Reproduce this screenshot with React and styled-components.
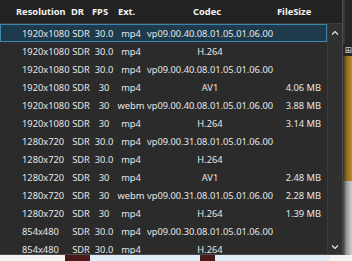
import React from "react";
import styled, { createGlobalStyle } from "styled-components";

const Global = createGlobalStyle`
  html, body { margin: 0; padding: 0; background: #1e1e1e; }
  body { font-family: "Noto Sans", "Open Sans", sans-serif; }
`;

const Stage = styled.div`
  width: 352px;
  height: 261px;
  display: grid;
  grid-template-columns: 343px 9px;
  grid-template-rows: 255px 6px;
  overflow: hidden;
`;

const Popup = styled.div`
  grid-column: 1;
  grid-row: 1;
  display: grid;
  grid-template-rows: 24px 1fr;
  background: #2b2b2b;
  border-right: 1px solid #4b4b4b;
  border-bottom: 1px solid #4b4b4b;
  overflow: hidden;
  font-size: 9.3px;
  color: #e6e6e6;
`;

const Header = styled.div`
  display: grid;
  grid-template-columns: 55px 21px 26px 75px 84px 1fr;
  align-items: center;
  padding-left: 16px;
  background: #222222;
  border-bottom: 1px solid #3e3e3e;
  font-weight: 700;
  color: #f2f2f2;
`;

const Body = styled.div`
  display: flex;
  overflow: hidden;
`;

const List = styled.div`
  flex: 1;
  display: flex;
  flex-direction: column;
`;

const Row = styled.div`
  flex: none;
  height: 18px;
  box-sizing: border-box;
  display: grid;
  grid-template-columns: 48px 22px 24px 30px 128px 47px;
  align-items: center;
  padding-left: 21px;
  background: ${(p) => (p.$selected ? "#1d3b4d" : "transparent")};
  border: 1px solid ${(p) => (p.$selected ? "#3f86ad" : "transparent")};
  white-space: nowrap;
`;

const Cell = styled.span`
  text-align: ${(p) => p.$align || "center"};
`;

const Scrollbar = styled.div`
  width: 14px;
  flex: none;
  background: #303030;
  border-left: 1px solid #3a3a3a;
  display: flex;
  flex-direction: column;
  justify-content: space-between;
  align-items: center;
  padding: 5px 0 3px;
`;

const Arrow = styled.svg`
  width: 8px;
  height: 8px;
  display: block;
`;

const Side = styled.div`
  grid-column: 2;
  grid-row: 1;
  display: grid;
  grid-template-rows: 44px 12px 125px 1fr;
  background: #262626;
`;

const SideDark = styled.div`
  border-left: 2px solid #3a3a3a;
`;

const SideIcon = styled.div`
  display: flex;
  align-items: center;
  justify-content: flex-end;
  color: #cfcfcf;
  font-size: 9px;
  line-height: 1;
  font-family: "DejaVu Sans", sans-serif;
`;

const SideOrange = styled.div`
  background: linear-gradient(90deg, #3a3020 0%, #8a6a22 40%, #c08b2c 100%);
`;

const SideGray = styled.div`
  background: linear-gradient(90deg, #3a3a3a 0%, #9a9a9a 40%, #cfcfcf 100%);
`;

const Bottom = styled.div`
  grid-column: 1 / span 2;
  grid-row: 2;
  display: grid;
  grid-template-columns: 65px 25px 110px 15px 115px 1fr;
`;

const Block = styled.div`
  background: ${(p) => p.$c};
`;

const rows = [
  ["1920x1080", "SDR", "30.0", "mp4", "vp09.00.40.08.01.05.01.06.00", ""],
  ["1920x1080", "SDR", "30.0", "mp4", "H.264", ""],
  ["1920x1080", "SDR", "30.0", "mp4", "vp09.00.40.08.01.05.01.06.00", ""],
  ["1920x1080", "SDR", "30", "mp4", "AV1", "4.06 MB"],
  ["1920x1080", "SDR", "30", "webm", "vp09.00.40.08.01.05.01.06.00", "3.88 MB"],
  ["1920x1080", "SDR", "30", "mp4", "H.264", "3.14 MB"],
  ["1280x720", "SDR", "30.0", "mp4", "vp09.00.31.08.01.05.01.06.00", ""],
  ["1280x720", "SDR", "30.0", "mp4", "H.264", ""],
  ["1280x720", "SDR", "30", "mp4", "AV1", "2.48 MB"],
  ["1280x720", "SDR", "30", "webm", "vp09.00.31.08.01.05.01.06.00", "2.28 MB"],
  ["1280x720", "SDR", "30", "mp4", "H.264", "1.39 MB"],
  ["854x480", "SDR", "30.0", "mp4", "vp09.00.30.08.01.05.01.06.00", ""],
  ["854x480", "SDR", "30.0", "mp4", "H.264", ""],
];

export default function App() {
  return (
    <>
      <Global />
      <Stage>
        <Popup>
          <Header>
            <span>Resolution</span>
            <span>DR</span>
            <span>FPS</span>
            <span>Ext.</span>
            <span>Codec</span>
            <span>FileSize</span>
          </Header>
          <Body>
            <List>
              {rows.map((r, i) => (
                <Row key={i} $selected={i === 0}>
                  <Cell $align="left">{r[0]}</Cell>
                  <Cell>{r[1]}</Cell>
                  <Cell>{r[2]}</Cell>
                  <Cell>{r[3]}</Cell>
                  <Cell>{r[4]}</Cell>
                  <Cell $align="right">{r[5]}</Cell>
                </Row>
              ))}
            </List>
            <Scrollbar>
              <Arrow viewBox="0 0 8 8">
                <path d="M1 5.5 L4 2.5 L7 5.5" fill="none" stroke="#e8e8e8" strokeWidth="1.2" />
              </Arrow>
              <Arrow viewBox="0 0 8 8">
                <path d="M1 2.5 L4 5.5 L7 2.5" fill="none" stroke="#e8e8e8" strokeWidth="1.2" />
              </Arrow>
            </Scrollbar>
          </Body>
        </Popup>
        <Side>
          <SideDark />
          <SideIcon>⊞</SideIcon>
          <SideOrange />
          <SideGray />
        </Side>
        <Bottom>
          <Block $c="#f4f4f4" />
          <Block $c="#4a1a1a" />
          <Block $c="#dfeef6" />
          <Block $c="#4a1a1a" />
          <Block $c="#dfeef6" />
          <Block $c="#f4f4f4" />
        </Bottom>
      </Stage>
    </>
  );
}
